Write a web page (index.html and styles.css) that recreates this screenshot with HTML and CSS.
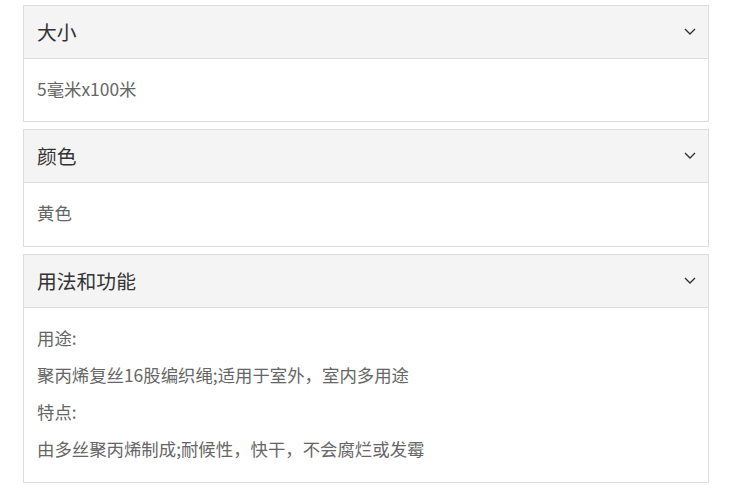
FILE: index.html
```html
<!DOCTYPE html>
<html lang="zh-CN">
<head>
    <meta charset="UTF-8"/>
    <meta name="viewport" content="width=device-width, initial-scale=1.0"/>
    <title>产品参数</title>
    <link rel="stylesheet" href="styles.css">
</head>
<body>

<div class="specs">
    <div class="panel">
        <div class="panel-head">
            <span>大小</span>
            <svg class="chevron" width="12" height="7" viewBox="0 0 12 7"><path d="M1 1l5 5 5-5" fill="none" stroke="#333" stroke-width="1.4"/></svg>
        </div>
        <div class="panel-body">
            <p>5毫米x100米</p>
        </div>
    </div>

    <div class="panel">
        <div class="panel-head">
            <span>颜色</span>
            <svg class="chevron" width="12" height="7" viewBox="0 0 12 7"><path d="M1 1l5 5 5-5" fill="none" stroke="#333" stroke-width="1.4"/></svg>
        </div>
        <div class="panel-body">
            <p>黄色</p>
        </div>
    </div>

    <div class="panel">
        <div class="panel-head">
            <span>用法和功能</span>
            <svg class="chevron" width="12" height="7" viewBox="0 0 12 7"><path d="M1 1l5 5 5-5" fill="none" stroke="#333" stroke-width="1.4"/></svg>
        </div>
        <div class="panel-body">
            <p>用途:</p>
            <p>聚丙烯复丝16股编织绳;适用于室外，室内多用途</p>
            <p>特点:</p>
            <p>由多丝聚丙烯制成;耐候性，快干，不会腐烂或发霉</p>
        </div>
    </div>
</div>

</body>
</html>
```

FILE: styles.css
```css
* {
    box-sizing: border-box;
}

body {
    margin: 0;
    background: #fff;
    font-family: "Microsoft YaHei", "Noto Sans CJK SC", "Noto Sans", sans-serif;
}

.specs {
    padding: 5px 25px 0 23px;
    display: flex;
    flex-direction: column;
    gap: 7px;
}

.panel {
    border: 1px solid #ddd;
    background: #fff;
}

.panel-head {
    display: flex;
    align-items: center;
    justify-content: space-between;
    height: 53px;
    padding: 0 12px 1px 13px;
    background: #f4f4f4;
    border-bottom: 1px solid #ddd;
    font-size: 19.8px;
    color: #333;
}

.chevron {
    display: block;
}

.panel-body {
    padding: 11px 13px 14px;
}

.panel-body p {
    margin: 0;
    font-size: 17.4px;
    line-height: 37.3px;
    color: #666;
}
```
